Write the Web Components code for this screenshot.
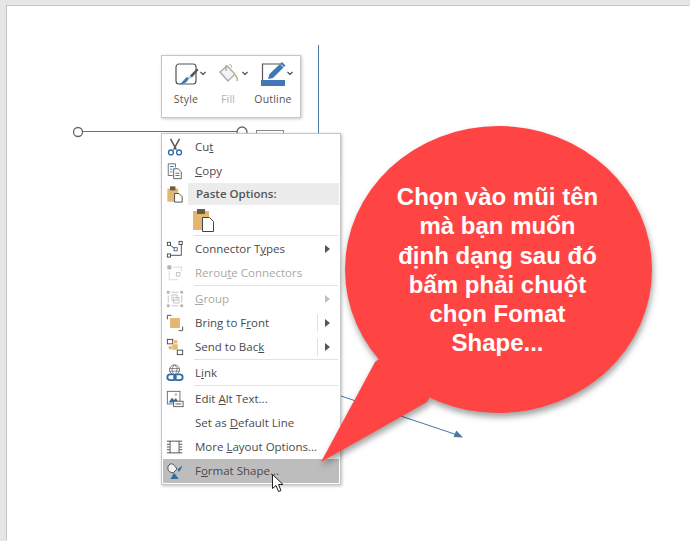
<!DOCTYPE html>
<html lang="vi">
<head>
<meta charset="utf-8">
<title>Format Shape</title>
<style>
  html, body { margin: 0; padding: 0; background: #e6e6e6; }
</style>
</head>
<body>

<slide-canvas>
  <mini-toolbar>
    <tool-button icon="style" label="Style" style="width:48px"></tool-button>
    <tool-button icon="fill" label="Fill" style="width:36px" disabled></tool-button>
    <tool-button icon="outline" label="Outline" style="width:54px"></tool-button>
  </mini-toolbar>

  <context-menu>
    <menu-item icon="cut"><span>Cu<u>t</u></span></menu-item>
    <menu-item icon="copy"><span><u>C</u>opy</span></menu-item>
    <menu-heading icon="paste">Paste Options:</menu-heading>
    <paste-row></paste-row>
    <menu-sep></menu-sep>
    <menu-item icon="connector" arrow><span>Connector T<u>y</u>pes</span></menu-item>
    <menu-item icon="reroute" disabled><span>Rerou<u>t</u>e Connectors</span></menu-item>
    <menu-sep></menu-sep>
    <menu-item icon="group" arrow disabled><span><u>G</u>roup</span></menu-item>
    <menu-item icon="front" arrow split><span>Bring to F<u>r</u>ont</span></menu-item>
    <menu-item icon="back" arrow split><span>Send to Bac<u>k</u></span></menu-item>
    <menu-sep></menu-sep>
    <menu-item icon="link"><span>L<u>i</u>nk</span></menu-item>
    <menu-sep></menu-sep>
    <menu-item icon="alt"><span>Edit <u>A</u>lt Text...</span></menu-item>
    <menu-item><span>Set as <u>D</u>efault Line</span></menu-item>
    <menu-item icon="layout"><span>More <u>L</u>ayout Options...</span></menu-item>
    <menu-item icon="format" active><span>F<u>o</u>rmat Shape...</span></menu-item>
  </context-menu>

  <speech-callout>
    <span>Chọn vào mũi tên</span>
    <span>mà bạn muốn</span>
    <span>định dạng sau đó</span>
    <span>bấm phải chuột</span>
    <span>chọn Fomat</span>
    <span>Shape...</span>
  </speech-callout>

  <mouse-cursor></mouse-cursor>
</slide-canvas>

<script>
/* ── Iconos del menú (viewBox 0 0 20 20) ─────────────────── */
const ICONS = {
  cut: `<path d="M5 1l6.500 12M15 1L8.500 13" stroke="#5a5a5a" stroke-width="1.700" fill="none"/>
        <circle cx="5.500" cy="16" r="2.700" fill="none" stroke="#2e6da4" stroke-width="1.500"/>
        <circle cx="14.500" cy="16" r="2.700" fill="none" stroke="#2e6da4" stroke-width="1.500"/>`,
  copy: `<path d="M2.500 2h8v4M2.500 2v13h5" fill="#fff" stroke="#666"/>
         <path d="M8.500 7.500h5l3.500 3.500v7.500h-8.500z" fill="#fff" stroke="#555"/>
         <path d="M4.500 5h4M4.500 8h2.500M4.500 11h2.500M10.500 12.500h4.500M10.500 15h4.500" stroke="#2e6da4"/>`,
  paste: `<rect x="1.500" y="4" width="12" height="14.500" fill="#e3b76f"/>
          <rect x="4.500" y="1.500" width="6" height="4.500" fill="#6b5a45"/>
          <path d="M9.500 9.500h5l3.500 3.500v6h-8.500z" fill="#fff" stroke="#444"/>`,
  connector: `<rect x="1.500" y="2.500" width="3.500" height="3.500" fill="#fff" stroke="#444"/>
              <rect x="14.500" y="1.500" width="3.500" height="3.500" fill="#fff" stroke="#444"/>
              <rect x="1.500" y="15.500" width="3.500" height="3.500" fill="#fff" stroke="#444"/>
              <rect x="9" y="8.500" width="3.500" height="3.500" fill="#fff" stroke="#2e6da4"/>
              <path d="M5 6l4 3M17 5.500V17H5.500" fill="none" stroke="#444"/>`,
  reroute: `<rect x="1.500" y="1.500" width="4.500" height="4.500" fill="#9a9a9a"/>
            <rect x="11.500" y="9.500" width="4" height="4" fill="#fff" stroke="#aaa"/>
            <path d="M8 3.500h9M17 3.500v4M3.500 8v9.500h9.500" fill="none" stroke="#aaa" stroke-dasharray="1.500 1"/>`,
  group: `<g fill="#9a9a9a"><rect x="1" y="1" width="3" height="3"/><rect x="16" y="1" width="3" height="3"/><rect x="1" y="16" width="3" height="3"/><rect x="16" y="16" width="3" height="3"/></g>
          <path d="M6.500 5.500h6v6h-6zM8.500 8.500h6v6h-6zM2.500 6v8M17.500 6v8M6 2.500h8M6 17.500h8" fill="none" stroke="#aaa"/>`,
  front: `<path d="M1.500 6V1.500H6M14 18.500h4.500V14" fill="none" stroke="#444"/>
          <rect x="4.500" y="4.500" width="11" height="11" fill="#e3b76f"/>`,
  back: `<rect x="1.500" y="1.500" width="6" height="5" fill="#fff" stroke="#444"/>
         <rect x="12.500" y="13.500" width="6" height="5" fill="#fff" stroke="#444"/>
         <rect x="7" y="7" width="6" height="6" fill="#e3b76f"/>
         <rect x="9" y="2.500" width="3.500" height="3.500" fill="#e3b76f"/><rect x="3" y="9" width="3.500" height="3.500" fill="#e3b76f"/>`,
  link: `<circle cx="9.500" cy="6.500" r="5.500" fill="none" stroke="#666"/>
         <path d="M4 5h11M4 8h11M9.500 1c-3.500 3-3.500 8 0 11M9.500 1c3.500 3 3.500 8 0 11" fill="none" stroke="#666" stroke-width=".8"/>
         <rect x="1.500" y="11.500" width="9.500" height="6.500" rx="3.200" fill="#fff" stroke="#2e6da4" stroke-width="2"/>
         <rect x="9" y="11.500" width="9.500" height="6.500" rx="3.200" fill="none" stroke="#2e6da4" stroke-width="2"/>`,
  alt: `<rect x="1.500" y="1.500" width="14" height="14" fill="#fff" stroke="#666"/>
        <path d="M3 14l3.500-5.500 2.500 2.500 2-2 3 5z" fill="#2e6da4"/>
        <circle cx="11" cy="5" r="1.500" fill="#e3b76f"/>
        <rect x="8.500" y="12.500" width="10.500" height="6" fill="#fff" stroke="#555"/>
        <path d="M10.500 15.500h6.500" stroke="#555"/>`,
  layout: `<path d="M1 3.500h17M1 16.500h17M1 7h3M1 10h3M1 13h3M15 7h3M15 10h3M15 13h3M4.500 3.500v13M14.500 3.500v13" fill="none" stroke="#444"/>`,
  format: `<path d="M2 7c0-3 2-5 4-5s5 3 6 6l-4 4C5 12 2 10 2 7z" fill="#f2f2f2" stroke="#444"/>
           <path d="M13 8c2-1 4-3 5-4-.5 3-2 6-4 7z" fill="#2e6da4"/>
           <path d="M5 19l4-7 5 7z" fill="#2e6da4"/>`
};

/* ── Lienzo de la diapositiva ────────────────────────────── */
class SlideCanvas extends HTMLElement {
  connectedCallback() {
    this.attachShadow({ mode: 'open' }).innerHTML = `
      <style>
        :host { display: block; position: relative; width: 690px; height: 541px; overflow: hidden;
                background: #e6e6e6; font-family: "Open Sans", "Liberation Sans", sans-serif; }
        .sheet { position: absolute; left: 7px; top: 6px; right: 0; bottom: 0; background: #fff;
                 box-shadow: -1px -1px 0 #c4c4c4; }
        svg { position: absolute; left: 0; top: 0; }
      </style>
      <div class="sheet"></div>
      <svg width="690" height="541" viewBox="0 0 690 541">
        <g fill="none" stroke="#4a76a8" stroke-width="1">
          <path d="M318.500 45V134"/>
          <path d="M78 131.500H242"/>
          <path d="M338 395L456 434.500"/>
        </g>
        <path d="M463 437.500l-9.500-.5 2.800-6.500z" fill="#4a76a8"/>
        <circle cx="78" cy="132" r="4.500" fill="#fff" stroke="#666" stroke-width="1.300"/>
        <circle cx="242" cy="132" r="5" fill="#fff" stroke="#666" stroke-width="1.300"/>
        <rect x="256.500" y="130.500" width="27" height="6" fill="#fff" stroke="#888"/>
      </svg>
      <slot></slot>`;
  }
}

/* ── Mini barra de herramientas ──────────────────────────── */
class MiniToolbar extends HTMLElement {
  connectedCallback() {
    this.attachShadow({ mode: 'open' }).innerHTML = `
      <style>
        :host { position: absolute; left: 161px; top: 55px; width: 140px; height: 63px; box-sizing: border-box;
                display: flex; background: #fff;
                border: 1px solid #c6c6c6; box-shadow: 1px 1px 3px rgba(0,0,0,.22); }
      </style>
      <slot></slot>`;
  }
}

/* Iconos de la barra: cada svg ocupa todo el ancho de su botón */
const TOOL_ICONS = {
  style: `<rect x="14" y="2" width="20" height="20" rx="3" fill="#fff" stroke="#555" stroke-width="1.200"/>
          <path d="M17 22.500c3 0 6-1 8-3l2-3-2-1.500c-2 1-4 5-8 7.500z" fill="#3f78b5"/>
          <path d="M26 15l2 2 2-1.500-2-2z" fill="#b9cfe6"/>
          <path d="M28 13.500l7-7 1.500 1.500-6.500 7.500z" fill="#555"/>
          <path d="M38.500 10l2.500 2.500L43.500 10" fill="none" stroke="#444" stroke-width="1.100"/>`,
  fill: `<path d="M10 10l7-6 8 8-7 7z" fill="#f3f3f3" stroke="#a9a9a9" stroke-width="1.300"/>
         <path d="M16 3v6" stroke="#a9a9a9" stroke-width="1.300" fill="none"/>
         <path d="M19 3c2-1 3 1 2 3" stroke="#c9a86c" fill="none"/>
         <path d="M25 13c2 2 3 4 2 6" stroke="#c9a86c" stroke-width="1.400" fill="none"/>
         <path d="M32.500 10l2.500 2.500L37.500 10" fill="none" stroke="#444" stroke-width="1.100"/>`,
  outline: `<path d="M37 2H16.500V19H37" fill="none" stroke="#555" stroke-width="1.200"/>
            <path d="M22 17l1.500-5L34 2l3.500 3.500L27 16z" fill="#3f78b5"/>
            <path d="M36 0l3.500 3.500-1.500 1.500-3.500-3.500z" fill="#3f78b5"/>
            <rect x="15" y="18" width="24" height="6" fill="#3f78b5"/>
            <path d="M41.500 10l2.500 2.500L46.500 10" fill="none" stroke="#444" stroke-width="1.100"/>`
};

class ToolButton extends HTMLElement {
  connectedCallback() {
    const off = this.hasAttribute('disabled');
    const icon = this.getAttribute('icon');
    const w = parseInt(this.style.width, 10);
    this.attachShadow({ mode: 'open' }).innerHTML = `
      <style>
        :host { display: flex; flex-direction: column; align-items: center; padding-top: 6px; flex: none;
                font-size: 10.500px; line-height: 14px; letter-spacing: .2px; color: ${off ? '#b0b0b0' : '#555'}; }
        svg { display: block; margin-bottom: 4px; overflow: visible; }
        .label { display: block; }
      </style>
      <svg width="${w}" height="26" viewBox="0 0 ${w} 26">${TOOL_ICONS[icon]}</svg>
      <span class="label">${this.getAttribute('label')}</span>`;
  }
}

/* ── Menú contextual ─────────────────────────────────────── */
class ContextMenu extends HTMLElement {
  connectedCallback() {
    this.attachShadow({ mode: 'open' }).innerHTML = `
      <style>
        :host { position: absolute; left: 161px; top: 133px; width: 180px; box-sizing: border-box;
                display: flex; flex-direction: column; padding: 1px; background: #fff;
                border: 1px solid #c6c6c6; box-shadow: 1px 1px 3px rgba(0,0,0,.25);
                font-size: 11.500px; color: #444; }
      </style>
      <slot></slot>`;
  }
}

class MenuItem extends HTMLElement {
  connectedCallback() {
    const off = this.hasAttribute('disabled');
    const icon = this.getAttribute('icon');
    const arrow = this.hasAttribute('arrow');
    const split = this.hasAttribute('split');
    const active = this.hasAttribute('active');
    this.attachShadow({ mode: 'open' }).innerHTML = `
      <style>
        :host { display: flex; align-items: center; height: 24px; flex: none;
                color: ${off ? '#a8a8a8' : '#4a4a4a'}; background: ${active ? '#bdbdbd' : 'transparent'}; }
        .icon { width: 32px; display: flex; justify-content: center; flex: none; padding-right: 8px; box-sizing: border-box; opacity: ${off ? .75 : 1}; }
        .text { flex: 1; white-space: nowrap; padding-bottom: 2px; }
        .split { width: 1px; height: 18px; background: ${split ? '#e2e2e2' : 'transparent'}; margin-right: 7px; }
        .arrow { width: 0; height: 0; border-left: 5px solid ${off ? '#c0c0c0' : '#555'}; border-top: 4px solid transparent;
                 border-bottom: 4px solid transparent; margin-right: 9px; }
        svg { display: block; }
      </style>
      <span class="icon">${icon ? `<svg width="18" height="18" viewBox="0 0 20 20">${ICONS[icon]}</svg>` : ''}</span>
      <span class="text"><slot></slot></span>
      ${arrow ? `<span class="split"></span><span class="arrow"></span>` : ''}`;
  }
}

class MenuHeading extends HTMLElement {
  connectedCallback() {
    this.attachShadow({ mode: 'open' }).innerHTML = `
      <style>
        :host { display: flex; align-items: center; height: 22px; flex: none; font-weight: 600; color: #555; }
        .icon { width: 32px; display: flex; justify-content: center; padding-right: 8px; box-sizing: border-box; flex: none; }
        .text { flex: 1; align-self: stretch; display: flex; align-items: center; background: #ececec;
                margin-left: -7px; padding: 0 0 2px 8px; }
      </style>
      <span class="icon"><svg width="18" height="18" viewBox="0 0 20 20">${ICONS[this.getAttribute('icon')]}</svg></span>
      <span class="text"><slot></slot></span>`;
  }
}

class PasteRow extends HTMLElement {
  connectedCallback() {
    this.attachShadow({ mode: 'open' }).innerHTML = `
      <style>
        :host { display: flex; align-items: center; height: 30px; flex: none; padding-left: 29px; }
      </style>
      <svg width="24" height="25" viewBox="0 0 24 25">
        <rect x="1" y="3" width="16" height="19" fill="#e3b76f"/>
        <rect x="5" y="1" width="8" height="5" fill="#6b5a45"/>
        <path d="M10.500 9.500h7l4 4v10h-11z" fill="#fff" stroke="#444"/>
      </svg>`;
  }
}

class MenuSep extends HTMLElement {
  connectedCallback() {
    this.attachShadow({ mode: 'open' }).innerHTML = `
      <style>
        :host { display: block; height: 1px; margin: 0 1px 1px 31px; background: #e2e2e2; flex: none; }
      </style>`;
  }
}

/* ── Globo rojo ──────────────────────────────────────────── */
class SpeechCallout extends HTMLElement {
  connectedCallback() {
    this.attachShadow({ mode: 'open' }).innerHTML = `
      <style>
        :host { position: absolute; left: 300px; top: 110px; width: 390px; height: 380px; }
        svg { position: absolute; left: 0; top: 0; overflow: visible; filter: drop-shadow(1px 4px 3px rgba(0,0,0,.38)); }
        .text { position: absolute; left: 43px; top: 72px; width: 309px; display: flex; flex-direction: column; align-items: center;
                font: bold 24px/29.300px "Liberation Sans", Arial, sans-serif; color: #fff; }
        ::slotted(span) { display: block; white-space: nowrap; }
      </style>
      <svg width="390" height="380" viewBox="0 0 390 380">
        <g fill="#ff4444">
          <ellipse cx="198.500" cy="159.500" rx="153.500" ry="143.500"/>
          <polygon points="21,352 75,252 198,160 127,292"/>
        </g>
      </svg>
      <div class="text"><slot></slot></div>`;
  }
}

/* ── Puntero del ratón ───────────────────────────────────── */
class MouseCursor extends HTMLElement {
  connectedCallback() {
    this.attachShadow({ mode: 'open' }).innerHTML = `
      <style>:host { position: absolute; left: 272px; top: 474px; width: 14px; height: 19px; }</style>
      <svg width="14" height="19" viewBox="0 0 14 19">
        <path d="M.500.500V14.500L4 11.500 6.500 17.500 9 16.500 6.500 10.500H11Z" fill="#fff" stroke="#222"/>
      </svg>`;
  }
}

customElements.define('slide-canvas', SlideCanvas);
customElements.define('mini-toolbar', MiniToolbar);
customElements.define('tool-button', ToolButton);
customElements.define('context-menu', ContextMenu);
customElements.define('menu-item', MenuItem);
customElements.define('menu-heading', MenuHeading);
customElements.define('paste-row', PasteRow);
customElements.define('menu-sep', MenuSep);
customElements.define('speech-callout', SpeechCallout);
customElements.define('mouse-cursor', MouseCursor);
</script>
</body>
</html>
